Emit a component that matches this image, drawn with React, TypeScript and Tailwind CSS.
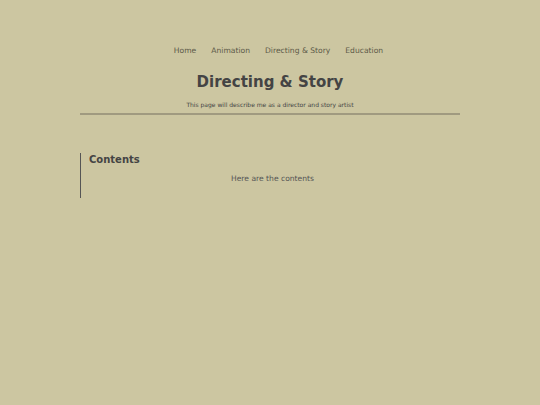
export default function App() {
  const links = ['Home', 'Animation', 'Directing & Story', 'Education']
  return (
    <div className="min-h-[405px] w-full bg-[#ccc6a1] font-['DejaVu_Sans',sans-serif] text-[#444]">
      <div className="mx-auto w-[380px] pt-[46px]">
        <nav className="flex justify-center gap-[15px] pl-[17px] text-[7.6px] leading-[10px] text-[#5c5a48]">
          {links.map((l) => (
            <span key={l}>{l}</span>
          ))}
        </nav>
        <h1 className="mt-[16px] text-center text-[15px] font-bold leading-[20px] text-[#444]">
          Directing &amp; Story
        </h1>
        <p className="mt-[8px] text-center text-[6px] leading-[10px] text-[#444]">
          This page will describe me as a director and story artist
        </p>
        <div className="mt-[3px] h-[2px] bg-[#a09a80]" />
        <section className="mt-[38px] flex h-[45px] flex-col border-l border-[#555] pl-[8px]">
          <h2 className="mt-[1px] text-[10px] font-bold leading-[12px] text-[#444]">Contents</h2>
          <p className="mt-[8px] pr-[4px] text-center text-[7.6px] leading-[10px] text-[#555]">
            Here are the contents
          </p>
        </section>
      </div>
    </div>
  )
}
